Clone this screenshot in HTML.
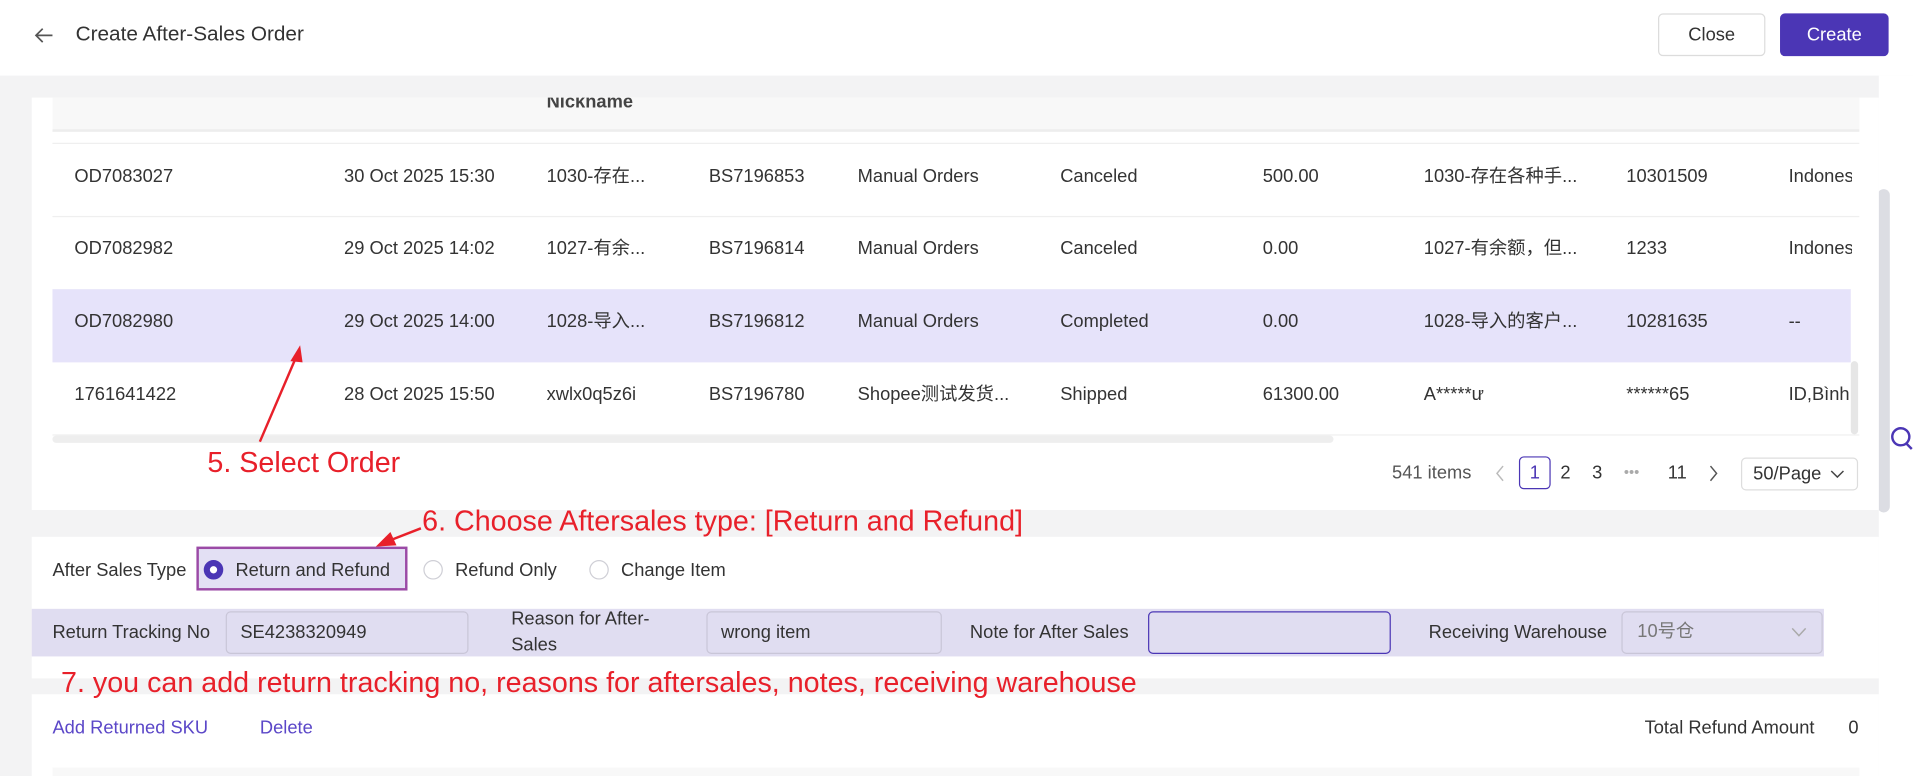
<!DOCTYPE html>
<html><head><meta charset="utf-8"><style>
html,body{margin:0;padding:0;width:1913px;height:776px;overflow:hidden;background:#f3f3f4}
#w{position:absolute;left:0;top:0;width:1568px;height:636px;transform:scale(1.22003,1.2201);transform-origin:0 0;font-family:"Liberation Sans","Noto Sans CJK SC",sans-serif;color:#333;font-size:15px;background:#f3f3f4}
.a{position:absolute;white-space:nowrap}
.t{position:absolute;white-space:nowrap;line-height:20px}
.red{color:#e8202a;font-size:23.5px;position:absolute;white-space:nowrap}
.inp{position:absolute;border:1px solid #c9c6d8;border-radius:4px;box-sizing:border-box}
.radio{position:absolute;width:16px;height:16px;border:1px solid #cfcfd6;border-radius:50%;box-sizing:border-box;background:#fff}
.r1 .t,.r2 .t,.r3 .t,.r4 .t{margin-top:2px}
</style></head><body><div id="w">
<!-- header -->
<div class="a" style="left:0;top:0;width:1568px;height:62px;background:#fff"></div>
<svg class="a" style="left:27px;top:20px" width="18" height="18" viewBox="0 0 18 18"><path d="M16 9H3M8 3.5L2.5 9 8 14.5" fill="none" stroke="#555" stroke-width="1.4"/></svg>
<div class="t" style="left:62px;top:18px;font-size:17px;color:#333">Create After-Sales Order</div>
<div class="a" style="left:1359px;top:11px;width:88px;height:35px;border:1px solid #dcdcdc;border-radius:4px;box-sizing:border-box;background:#fff;text-align:center;line-height:33px;font-size:15px">Close</div>
<div class="a" style="left:1459px;top:11px;width:89px;height:35px;border-radius:4px;background:#4b36b5;color:#fff;text-align:center;line-height:35px;font-size:15px">Create</div>
<!-- right side -->
<div class="a" style="left:1540px;top:62px;width:28px;height:574px;background:#fff"></div>
<div class="a" style="left:1539px;top:155px;width:10px;height:265px;background:#dcdde3;border-radius:5px"></div>
<svg class="a" style="left:1548px;top:348px" width="20" height="22"><circle cx="10" cy="10" r="7" fill="none" stroke="#4b36b5" stroke-width="2"/><path d="M14 15l5 5" stroke="#4b36b5" stroke-width="2"/></svg>
<!-- card 1 -->
<div class="a" style="left:26px;top:80px;width:1514px;height:338px;background:#fff"></div>
<div class="a" style="left:43px;top:80px;width:1481px;height:26px;background:#f8f8f8;border-bottom:2px solid #ededed;overflow:hidden"><div class="t" style="left:405px;top:-6px;font-weight:bold;color:#444">Nickname</div></div>
<div class="a" style="left:43px;top:117px;width:1481px;height:1px;background:#efefef"></div>
<div class="a" style="left:43px;top:177px;width:1481px;height:1px;background:#efefef"></div>
<div class="a" style="left:43px;top:237px;width:1474px;height:60px;background:#e6e3fa"></div>
<div class="a" style="left:43px;top:356px;width:1481px;height:1px;background:#efefef"></div>
<div class="a" style="left:43px;top:357px;width:1050px;height:6px;background:#eeeeee;border-radius:3px"></div>
<div class="a" style="left:1517px;top:296px;width:6px;height:60px;background:#e6e6e6;border-radius:3px"></div>
<div class="r1"><div class="t" style="left:61px;top:133px">OD7083027</div><div class="t" style="left:282px;top:133px">30 Oct 2025 15:30</div><div class="t" style="left:448px;top:133px">1030-存在...</div><div class="t" style="left:581px;top:133px">BS7196853</div><div class="t" style="left:703px;top:133px">Manual Orders</div><div class="t" style="left:869px;top:133px">Canceled</div><div class="t" style="left:1035px;top:133px">500.00</div><div class="t" style="left:1167px;top:133px">1030-存在各种手...</div><div class="t" style="left:1333px;top:133px">10301509</div><div class="t" style="left:1466px;top:133px;width:52px;overflow:hidden">Indonesia</div></div>
<div class="r2"><div class="t" style="left:61px;top:192px">OD7082982</div><div class="t" style="left:282px;top:192px">29 Oct 2025 14:02</div><div class="t" style="left:448px;top:192px">1027-有余...</div><div class="t" style="left:581px;top:192px">BS7196814</div><div class="t" style="left:703px;top:192px">Manual Orders</div><div class="t" style="left:869px;top:192px">Canceled</div><div class="t" style="left:1035px;top:192px">0.00</div><div class="t" style="left:1167px;top:192px">1027-有余额，但...</div><div class="t" style="left:1333px;top:192px">1233</div><div class="t" style="left:1466px;top:192px;width:52px;overflow:hidden">Indonesia</div></div>
<div class="r3"><div class="t" style="left:61px;top:252px">OD7082980</div><div class="t" style="left:282px;top:252px">29 Oct 2025 14:00</div><div class="t" style="left:448px;top:252px">1028-导入...</div><div class="t" style="left:581px;top:252px">BS7196812</div><div class="t" style="left:703px;top:252px">Manual Orders</div><div class="t" style="left:869px;top:252px">Completed</div><div class="t" style="left:1035px;top:252px">0.00</div><div class="t" style="left:1167px;top:252px">1028-导入的客户...</div><div class="t" style="left:1333px;top:252px">10281635</div><div class="t" style="left:1466px;top:252px">--</div></div>
<div class="r4"><div class="t" style="left:61px;top:312px">1761641422</div><div class="t" style="left:282px;top:312px">28 Oct 2025 15:50</div><div class="t" style="left:448px;top:312px">xwlx0q5z6i</div><div class="t" style="left:581px;top:312px">BS7196780</div><div class="t" style="left:703px;top:312px">Shopee测试发货...</div><div class="t" style="left:869px;top:312px">Shipped</div><div class="t" style="left:1035px;top:312px">61300.00</div><div class="t" style="left:1167px;top:312px">A*****ư</div><div class="t" style="left:1333px;top:312px">******65</div><div class="t" style="left:1466px;top:312px;width:52px;overflow:hidden">ID,Bình</div></div>
<!-- pagination -->
<div class="t" style="left:1141px;top:378px;color:#555">541 items</div>
<svg class="a" style="left:1226px;top:381px" width="8" height="14"><path d="M6 1L1 7l5 6" fill="none" stroke="#bbb" stroke-width="1.2"/></svg>
<div class="a" style="left:1245px;top:374px;width:26px;height:27px;border:1px solid #4b36b5;border-radius:4px;box-sizing:border-box;text-align:center;line-height:25px;color:#4b36b5">1</div>
<div class="t" style="left:1279px;top:378px">2</div><div class="t" style="left:1305px;top:378px">3</div>
<div class="t" style="left:1331px;top:377px;color:#aaa;font-size:12px">•••</div>
<div class="t" style="left:1367px;top:378px">11</div>
<svg class="a" style="left:1400px;top:381px" width="8" height="14"><path d="M2 1l5 6-5 6" fill="none" stroke="#555" stroke-width="1.2"/></svg>
<div class="a" style="left:1427px;top:375px;width:96px;height:27px;border:1px solid #ddd;border-radius:4px;box-sizing:border-box;line-height:25px;padding-left:9px">50/Page</div>
<svg class="a" style="left:1500px;top:384px" width="12" height="9"><path d="M1 2l5 5 5-5" fill="none" stroke="#444" stroke-width="1.2"/></svg>
<div class="red" style="left:170px;top:366px">5. Select Order</div>
<!-- card 2 -->
<div class="a" style="left:26px;top:440px;width:1514px;height:116px;background:#fff"></div>
<div class="red" style="left:346px;top:414px">6. Choose Aftersales type: [Return and Refund]</div>
<div class="t" style="left:43px;top:458px">After Sales Type</div>
<div class="a" style="left:161px;top:448px;width:173px;height:36px;border:2px solid #9b4aa6;box-sizing:border-box;background:#e3e0f4"></div>
<div class="radio" style="left:167px;top:459px;border:5px solid #4b36b5"></div>
<div class="t" style="left:193px;top:458px">Return and Refund</div>
<div class="radio" style="left:347px;top:459px"></div><div class="t" style="left:373px;top:458px">Refund Only</div>
<div class="radio" style="left:483px;top:459px"></div><div class="t" style="left:509px;top:458px">Change Item</div>
<div class="a" style="left:26px;top:499px;width:1469px;height:39px;background:#e0ddf1"></div>
<div class="t" style="left:43px;top:509px">Return Tracking No</div>
<div class="inp" style="left:185px;top:501px;width:199px;height:35px"></div><div class="t" style="left:197px;top:509px">SE4238320949</div>
<div class="t" style="left:419px;top:498px">Reason for After-</div><div class="t" style="left:419px;top:519px">Sales</div>
<div class="inp" style="left:579px;top:501px;width:193px;height:35px"></div><div class="t" style="left:591px;top:509px">wrong item</div>
<div class="t" style="left:795px;top:509px">Note for After Sales</div>
<div class="inp" style="left:941px;top:501px;width:199px;height:35px;border-color:#4b36b5"></div>
<div class="t" style="left:1171px;top:509px">Receiving Warehouse</div>
<div class="inp" style="left:1329px;top:501px;width:165px;height:35px"></div><div class="t" style="left:1342px;top:508px;color:#777">10号仓</div>
<svg class="a" style="left:1468px;top:513px" width="13" height="10"><path d="M1 2l5.5 6L12 2" fill="none" stroke="#aaa" stroke-width="1.2"/></svg>
<!-- card 3 -->
<div class="a" style="left:26px;top:569px;width:1514px;height:67px;background:#fff"></div>
<div class="red" style="left:50px;top:546px">7. you can add return tracking no, reasons for aftersales, notes, receiving warehouse</div>
<div class="t" style="left:43px;top:587px;color:#5b47c8">Add Returned SKU</div>
<div class="t" style="left:213px;top:587px;color:#5b47c8">Delete</div>
<div class="t" style="left:1348px;top:587px">Total Refund Amount</div>
<div class="t" style="left:1515px;top:587px">0</div>
<div class="a" style="left:43px;top:629px;width:1481px;height:7px;background:#f8f8f8"></div>
<!-- arrows on top -->
<svg class="a" style="left:0;top:0" width="1568" height="636"><path d="M213 362L243 292" stroke="#e8202a" stroke-width="2"/><path d="M246 283L238 296L248 297Z" fill="#e8202a"/>
<path d="M345 433L322 442" stroke="#e8202a" stroke-width="2"/><path d="M308 448L320 436L325 447Z" fill="#e8202a"/></svg>
</div></body></html>
